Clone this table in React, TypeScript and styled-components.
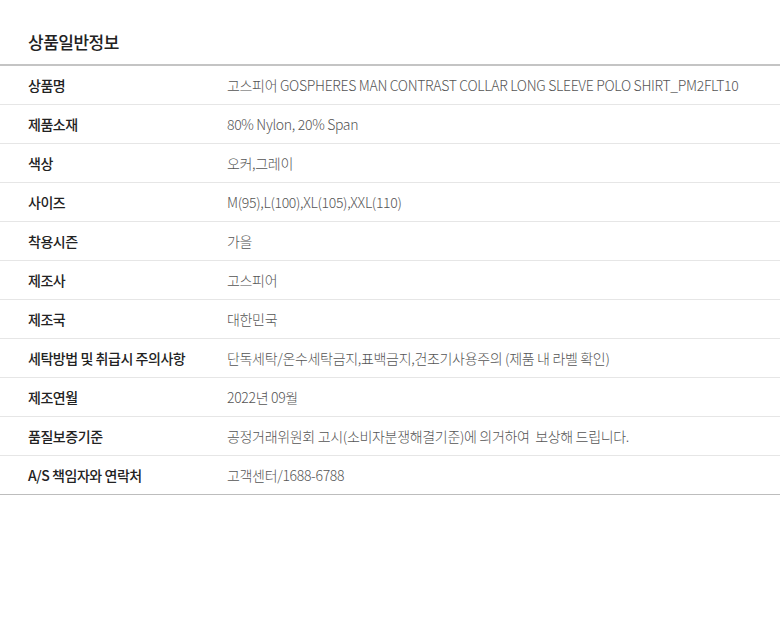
import styled, { createGlobalStyle } from "styled-components";

const GlobalStyle = createGlobalStyle`
  body {
    margin: 0;
    background: #fff;
    font-family: "Noto Sans CJK KR", "Noto Sans", sans-serif;
  }
`;

const Wrapper = styled.div`
  width: 780px;
`;

const Title = styled.h2`
  margin: 0;
  padding: 30px 28px 10px;
  font-size: 17px;
  line-height: 24px;
  font-weight: 500;
  letter-spacing: -0.5px;
  color: #222;
`;

const Table = styled.div`
  border-top: 2px solid #c4c4c4;
`;

const Row = styled.div<{ $last?: boolean }>`
  display: grid;
  grid-template-columns: 199px 1fr;
  align-items: center;
  height: 38px;
  padding-left: 28px;
  border-bottom: 1px solid ${(p) => (p.$last ? "#bdbdbd" : "#e6e6e6")};
`;

const Label = styled.div`
  font-size: 14px;
  font-weight: 500;
  letter-spacing: -0.45px;
  color: #222;
  white-space: nowrap;
`;

const Value = styled.div`
  font-size: 14px;
  font-weight: 300;
  letter-spacing: -0.32px;
  color: #555;
  white-space: pre;
`;

const rows: [string, string][] = [
  ["상품명", "고스피어 GOSPHERES MAN CONTRAST COLLAR LONG SLEEVE POLO SHIRT_PM2FLT10"],
  ["제품소재", "80% Nylon, 20% Span"],
  ["색상", "오커,그레이"],
  ["사이즈", "M(95),L(100),XL(105),XXL(110)"],
  ["착용시즌", "가을"],
  ["제조사", "고스피어"],
  ["제조국", "대한민국"],
  ["세탁방법 및 취급시 주의사항", "단독세탁/온수세탁금지,표백금지,건조기사용주의 (제품 내 라벨 확인)"],
  ["제조연월", "2022년 09월"],
  ["품질보증기준", "공정거래위원회 고시(소비자분쟁해결기준)에 의거하여  보상해 드립니다."],
  ["A/S 책임자와 연락처", "고객센터/1688-6788"],
];

export default function App() {
  return (
    <Wrapper>
      <GlobalStyle />
      <Title>상품일반정보</Title>
      <Table>
        {rows.map(([label, value], i) => (
          <Row key={label} $last={i === rows.length - 1}>
            <Label>{label}</Label>
            <Value>{value}</Value>
          </Row>
        ))}
      </Table>
    </Wrapper>
  );
}
